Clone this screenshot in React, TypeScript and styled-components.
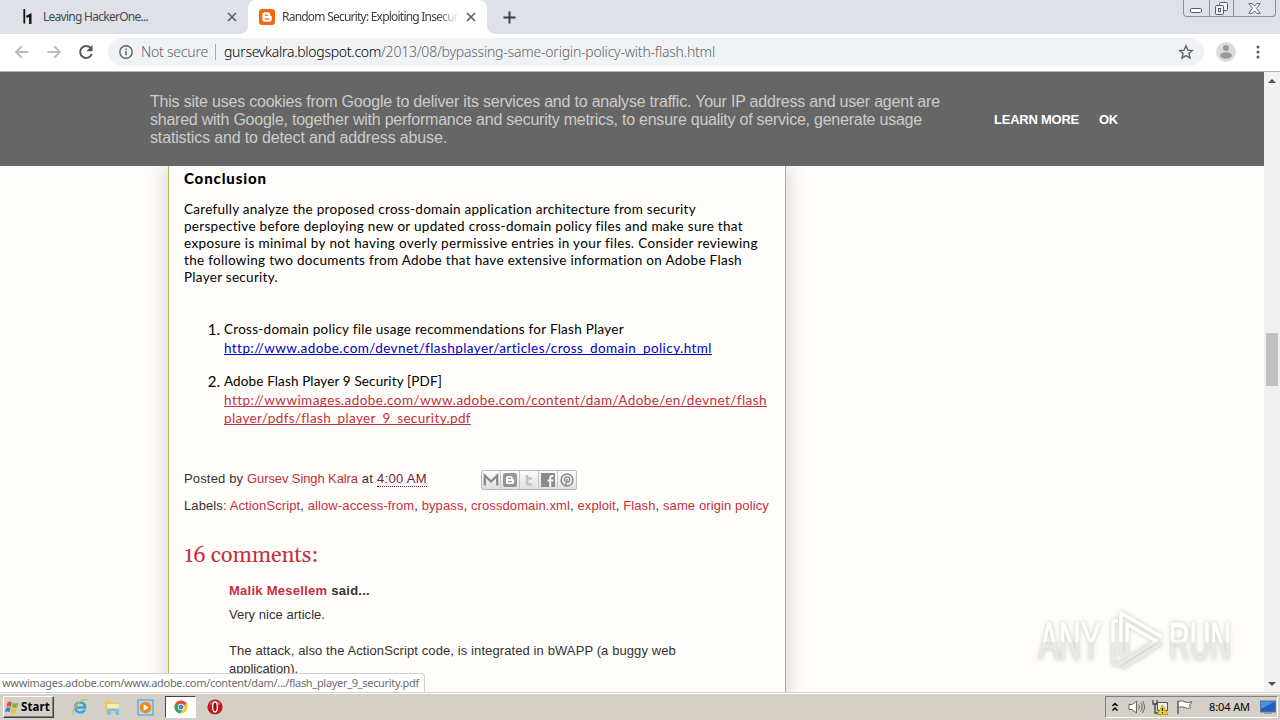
import React, {useLayoutEffect, useRef} from 'react';
import styled, {createGlobalStyle, css} from 'styled-components';

const ui = '"Noto Sans", "Open Sans", sans-serif';
const arial = '"Liberation Sans", Arial, sans-serif';
const calibri = 'Lato, "Noto Sans", sans-serif';

const GlobalStyle = createGlobalStyle`
    * {
        box-sizing: border-box;
    }
    body {
        margin: 0;
        overflow: hidden;
        font-family: ${arial};
    }
    a {
        color: #c4303e;
        text-decoration: none;
    }
`;

const Screen = styled.div`
    width: 1280px;
    height: 720px;
    display: flex;
    flex-direction: column;
    background: #fffdf9;
`;

const Run = styled.span`
    display: inline-block;
    white-space: pre;
`;

// Spreads the letters of one line of text over a given width
const Fit = ({width, children}: {width: number; children: React.ReactNode}) => {
    const ref = useRef<HTMLSpanElement>(null);

    useLayoutEffect(() => {
        const el = ref.current;
        if (!el) {
            return;
        }
        el.style.letterSpacing = '0.001px';
        const spare = width - el.getBoundingClientRect().width;
        el.style.letterSpacing = `${spare / (el.textContent || ' ').length}px`;
    }, [width]);

    return <Run ref={ref}>{children}</Run>;
};

/* ---------- browser ---------- */

const TabStrip = styled.div`
    height: 34px;
    flex: none;
    display: flex;
    align-items: flex-start;
    background: #dee1e8;
`;

const Tab = styled.div<{$active?: boolean}>`
    position: relative;
    width: ${(p) => (p.$active ? 239 : 248)}px;
    height: 34px;
    display: flex;
    align-items: center;
    padding: 0 11px 0 ${(p) => (p.$active ? 11 : 20)}px;
    font: 12px/34px ${ui};
    color: ${(p) => (p.$active ? '#3c4043' : '#45494d')};
    ${(p) =>
        p.$active &&
        css`
            background: #fff;
            border-radius: 8px 8px 0 0;
            &::before,
            &::after {
                content: '';
                position: absolute;
                bottom: 0;
                width: 8px;
                height: 8px;
            }
            &::before {
                left: -8px;
                background: radial-gradient(circle at 0 0, transparent 7.5px, #fff 8px);
            }
            &::after {
                right: -8px;
                background: radial-gradient(circle at 100% 0, transparent 7.5px, #fff 8px);
            }
        `}
`;

const TabTitle = styled.div<{$fade?: boolean}>`
    flex: 1;
    margin-left: 7px;
    overflow: hidden;
    ${(p) => p.$fade && 'mask-image: linear-gradient(90deg, #000 155px, transparent 177px);'}
`;

const NewTab = styled.div`
    height: 34px;
    display: flex;
    align-items: center;
    margin-left: 16px;
`;

const WindowButtons = styled.div`
    display: flex;
    width: 93px;
    height: 17px;
    margin: 0 4px 0 auto;
    border: 1px solid #8b8f99;
    border-top: 0;
    border-radius: 0 0 4px 4px;
`;

const WindowButton = styled.div<{$wide?: boolean}>`
    width: ${(p) => (p.$wide ? 42 : 25)}px;
    display: flex;
    align-items: center;
    justify-content: center;
    & + & {
        border-left: 1px solid #8b8f99;
    }
`;

const Toolbar = styled.div`
    height: 38px;
    flex: none;
    display: flex;
    align-items: center;
    padding: 0 12px 1px 12px;
    background: #fff;
    border-bottom: 1px solid #b4b4b4;
`;

const NavIcons = styled.div`
    display: flex;
    gap: 12px;
    width: 96px;
`;

const Omnibox = styled.div`
    width: 1096px;
    height: 28px;
    display: flex;
    align-items: center;
    padding: 0 10px;
    border-radius: 14px;
    background: #f0f3f5;
    font: 300 14px/28px ${ui};
    color: #5f6368;
`;

const Secure = styled.div`
    width: 68px;
    margin-left: 7px;
`;

const Divider = styled.div`
    width: 1px;
    height: 16px;
    margin: 0 8px 0 6px;
    background: #a5a8ab;
`;

const Host = styled.span`
    color: #000;
`;

const Star = styled.div`
    display: flex;
    margin-left: auto;
`;

const Profile = styled.div`
    display: flex;
    margin-left: 12px;
`;

const Menu = styled.div`
    display: flex;
    margin-left: 20px;
`;

/* ---------- page ---------- */

const Viewport = styled.div`
    position: relative;
    height: 620px;
    flex: none;
    display: flex;
    overflow: hidden;
`;

const Page = styled.div`
    width: 1264px;
    height: 620px;
    overflow: hidden;
`;

const CookieBar = styled.div`
    position: relative;
    z-index: 1;
    height: 94px;
    display: flex;
    padding: 21px 0 0 150px;
    background: #666;
    color: #ccc;
`;

const CookieText = styled.div`
    width: 844px;
    font-size: 16px;
    line-height: 18px;
`;

const CookieLinks = styled.div`
    display: flex;
    gap: 20px;
    padding-top: 18px;
    font-size: 13px;
    line-height: 18px;
    font-weight: 700;
    color: #fff;
`;

const Article = styled.div`
    width: 618px;
    height: 560px;
    margin-left: 168px;
    padding: 4px 0 0 15px;
    border: solid #b9b955;
    border-width: 0 1px;
    background: #fffdf9;
    box-shadow: 0 0 20px rgba(0, 0, 0, 0.2);
`;

const Heading = styled.div`
    font: 900 15px/17px ${calibri};
    color: #000;
`;

const Paragraph = styled.div`
    margin-top: 14px;
    font: 13.5px/17px ${calibri};
    color: #000;
`;

const Documents = styled.div`
    margin-top: 34px;
`;

const Document = styled.div`
    display: flex;
    margin-bottom: 14px;
    font: 13.5px/19px ${calibri};
    color: #000;
`;

const Marker = styled.div`
    width: 40px;
    padding-right: 4px;
    text-align: right;
    font-size: 15px;
`;

const DocLink = styled.a<{$plain?: boolean}>`
    display: block;
    line-height: 18.5px;
    color: ${(p) => (p.$plain ? '#0000c8' : '#c4303e')};
    span {
        text-decoration: underline 1px;
        text-underline-offset: 1px;
        text-decoration-skip-ink: none;
    }
`;

const Footer = styled.div`
    display: flex;
    align-items: center;
    height: 20px;
    margin-top: 41px;
    font-size: 13px;
    color: #333;
`;

const Time = styled.a`
    border-bottom: 1px dotted #7a2030;
    color: #7a2030;
`;

const Share = styled.div`
    display: flex;
    height: 20px;
    width: 96px;
    margin: 2px 0 0 54px;
    border: 1px solid #b9b9b9;
    border-radius: 2px;
    background: linear-gradient(#fcfcfc, #e0e0e0);
`;

const ShareButton = styled.div`
    width: 19px;
    flex: none;
    display: flex;
    align-items: center;
    justify-content: center;
    &:first-child {
        width: 18px;
    }
    & + & {
        border-left: 1px solid #c4c4c4;
    }
`;

const Labels = styled.div`
    margin-top: 8px;
    font-size: 13px;
    line-height: 18px;
    color: #333;
`;

const CommentsTitle = styled.div`
    margin-top: 27px;
    font: 22px/28px Gelasio, Georgia, "DejaVu Serif Condensed", "Liberation Serif", serif;
    color: #c4303e;
`;

const Comment = styled.div`
    margin: 12px 0 0 45px;
    font-size: 13px;
    line-height: 18px;
    color: #333;
`;

const Author = styled.div`
    margin-bottom: 6px;
    font-weight: 700;
`;

const ScrollBar = styled.div`
    width: 16px;
    display: flex;
    flex-direction: column;
    align-items: center;
    justify-content: space-between;
    padding: 5px 0 4px;
    background: #f1f1f1;
`;

const Thumb = styled.div`
    width: 12px;
    height: 53px;
    margin-bottom: 46px;
    background: #c1c1c1;
`;

const Status = styled.div`
    position: absolute;
    z-index: 2;
    left: 0;
    bottom: 0;
    width: 425px;
    height: 19px;
    padding-left: 2px;
    border: solid #d0d0ce;
    border-width: 1px 1px 0 0;
    border-radius: 0 4px 0 0;
    background: #fff;
    font: 11px/18px ${ui};
    color: #6c6c6c;
`;

const Watermark = styled.svg`
    position: absolute;
    left: 1030px;
    top: 530px;
    filter: drop-shadow(0 0 2px rgba(90, 90, 80, 0.35));
`;

/* ---------- taskbar ---------- */

const Taskbar = styled.div`
    height: 28px;
    flex: none;
    display: flex;
    align-items: center;
    padding: 1px 2px 0 3px;
    border-top: 1px solid #d4d0c8;
    box-shadow: inset 0 1px #fff;
    background: #d4d0c8;
`;

const Start = styled.div`
    width: 51px;
    height: 22px;
    display: flex;
    align-items: center;
    padding-left: 1px;
    gap: 1px;
    border: 1px solid;
    border-color: #fff #404040 #404040 #fff;
    box-shadow: inset -1px -1px #808080;
    font: 700 11.5px/20px ${ui};
    color: #000;
`;

const Launcher = styled.div<{$open?: boolean}>`
    width: ${(p) => (p.$open ? 31 : 33)}px;
    height: 22px;
    display: flex;
    align-items: center;
    justify-content: center;
    ${(p) =>
        p.$open &&
        css`
            margin: 0 2px 0 3px;
            border: 1px solid;
            border-color: #404040 #fff #fff #404040;
            background: #fff;
        `}
`;

const Launchers = styled.div`
    display: flex;
    margin-left: 9px;
`;

const Tray = styled.div`
    width: 173px;
    height: 22px;
    display: flex;
    align-items: center;
    margin-left: auto;
    padding-left: 5px;
    border: 1px solid;
    border-color: #808080 #fff #fff #808080;
`;

const Clock = styled.div`
    width: 41px;
    margin: 0 10px 0 16px;
    font: 11px/20px ${ui};
    color: #000;
`;

const TrayIcon = styled.div<{$gap: number}>`
    display: flex;
    margin-left: ${(p) => p.$gap}px;
`;

const Cross = () => (
    <svg width="10" height="10" viewBox="0 0 10 10">
        <path d="M1 1l8 8M9 1l-8 8" stroke="#5f6368" strokeWidth="1.7" />
    </svg>
);

const BloggerIcon = ({size, color}: {size: number; color: string}) => (
    <svg width={size} height={size} viewBox="0 0 16 16">
        <rect width="16" height="16" rx="3" fill={color} />
        <path
            d="M6.3 3.3h2.3a2.7 2.7 0 012.7 2.6c0 .8.2 1 .8 1 .5 0 .7.3.7.8v2a3 3 0 01-3 3H6.3a3 3 0 01-3-3V6.3a3 3 0 013-3z"
            fill="#fff"
        />
        <path d="M6.3 6.2h2.2M6.3 9.8h3.5" stroke={color} strokeWidth="1.3" strokeLinecap="round" />
    </svg>
);

const labels = ['ActionScript', 'allow-access-from', 'bypass', 'crossdomain.xml', 'exploit', 'Flash', 'same origin policy'];

const Browser = () => (
    <>
        <TabStrip>
            <Tab>
                <svg width="16" height="16" viewBox="0 0 16 16">
                    <path d="M4.300 0v14.500" stroke="#111" strokeWidth="1.800" />
                    <path d="M6.500 8l3.800-2V15" fill="none" stroke="#111" strokeWidth="2.400" />
                </svg>
                <TabTitle><Fit width={105}>Leaving HackerOne...</Fit></TabTitle>
                <Cross />
            </Tab>
            <Tab $active>
                <BloggerIcon size={16} color="#f4690f" />
                <TabTitle $fade><Fit width={176}>Random Security: Exploiting Insecur</Fit></TabTitle>
                <Cross />
            </Tab>
            <NewTab>
                <svg width="13" height="13" viewBox="0 0 13 13">
                    <path d="M6.5 0.5v12M0.5 6.5h12" stroke="#3c4043" strokeWidth="2" />
                </svg>
            </NewTab>
            <WindowButtons>
                <WindowButton>
                    <svg width="12" height="16" viewBox="0 0 12 16">
                        <rect x="0.5" y="8.5" width="11" height="4" rx="1" fill="#fff" stroke="#555b66" />
                    </svg>
                </WindowButton>
                <WindowButton>
                    <svg width="13" height="13" viewBox="0 0 13 13" fill="#f2f4f7" stroke="#555b66">
                        <rect x="4.5" y="0.5" width="8" height="8" rx="1" />
                        <rect x="0.5" y="3.5" width="8" height="9" rx="1" />
                        <rect x="3.5" y="6.5" width="2" height="3" />
                    </svg>
                </WindowButton>
                <WindowButton $wide>
                    <svg width="13" height="11" viewBox="0 0 13 11">
                        <path d="M.8.5h3.4l2.3 2.6L8.8.5h3.4L8.5 5.4l3.7 5H8.8L6.5 7.8l-2.3 2.6H.8l3.7-5z" fill="#fff" stroke="#555b66" strokeWidth=".9" />
                    </svg>
                </WindowButton>
            </WindowButtons>
        </TabStrip>
        <Toolbar>
            <NavIcons>
                <svg width="20" height="20" viewBox="0 0 20 20" fill="none" stroke="#b9bbbd" strokeWidth="1.8">
                    <path d="M16.5 10h-12M10 4l-6 6 6 6" />
                </svg>
                <svg width="20" height="20" viewBox="0 0 20 20" fill="none" stroke="#b9bbbd" strokeWidth="1.8">
                    <path d="M3.5 10h12M10 4l6 6-6 6" />
                </svg>
                <svg width="20" height="20" viewBox="0 0 20 20">
                    <path d="M14.8 6.2A6 6 0 1015.8 12" fill="none" stroke="#55595e" strokeWidth="2" />
                    <path d="M16.5 3v6.2h-6.2z" fill="#55595e" />
                </svg>
            </NavIcons>
            <Omnibox>
                <svg width="16" height="16" viewBox="0 0 16 16">
                    <circle cx="8" cy="8" r="6.2" fill="none" stroke="#5f6368" strokeWidth="1.4" />
                    <path d="M8 7v4.3M8 4.4v1.5" stroke="#5f6368" strokeWidth="1.5" />
                </svg>
                <Secure><Fit width={67}>Not secure</Fit></Secure>
                <Divider />
                <Host><Fit width={157}>gursevkalra.blogspot.com</Fit></Host>
                <Fit width={334}>/2013/08/bypassing-same-origin-policy-with-flash.html</Fit>
                <Star>
                    <svg width="16" height="16" viewBox="0 0 16 16">
                        <path d="M8 1.8l1.8 4.3 4.6.4-3.5 3 1.1 4.6L8 11.6l-4 2.5 1.1-4.6-3.5-3 4.6-.4z" fill="none" stroke="#5f6368" strokeWidth="1.4" />
                    </svg>
                </Star>
            </Omnibox>
            <Profile>
                <svg width="20" height="20" viewBox="0 0 20 20">
                    <circle cx="10" cy="10" r="10" fill="#dcdcdc" />
                    <circle cx="10" cy="6" r="3" fill="#9a9a9a" />
                    <ellipse cx="10" cy="13.5" rx="6" ry="3.2" fill="#9a9a9a" />
                </svg>
            </Profile>
            <Menu>
                <svg width="4" height="14" viewBox="0 0 4 14" fill="#55595e">
                    <circle cx="2" cy="2" r="1.5" />
                    <circle cx="2" cy="7" r="1.5" />
                    <circle cx="2" cy="12" r="1.5" />
                </svg>
            </Menu>
        </Toolbar>
    </>
);

const Post = () => (
    <Article>
        <Heading><Fit width={83}>Conclusion</Fit></Heading>
        <Paragraph>
            <Fit width={512}>Carefully analyze the proposed cross-domain application architecture from security</Fit><br />
            <Fit width={559}>perspective before deploying new or updated cross-domain policy files and make sure that</Fit><br />
            <Fit width={574}>exposure is minimal by not having overly permissive entries in your files. Consider reviewing</Fit><br />
            <Fit width={558}>the following two documents from Adobe that have extensive information on Adobe Flash</Fit><br />
            <Fit width={94}>Player security.</Fit>
        </Paragraph>
        <Documents>
            <Document>
                <Marker>1.</Marker>
                <div>
                    <Fit width={400}>Cross-domain policy file usage recommendations for Flash Player</Fit>
                    <DocLink $plain><Fit width={488}>http://www.adobe.com/devnet/flashplayer/articles/cross_domain_policy.html</Fit></DocLink>
                </div>
            </Document>
            <Document>
                <Marker>2.</Marker>
                <div>
                    <Fit width={218}>Adobe Flash Player 9 Security [PDF]</Fit>
                    <DocLink>
                        <Fit width={543}>http://wwwimages.adobe.com/www.adobe.com/content/dam/Adobe/en/devnet/flash</Fit><br />
                        <Fit width={247}>player/pdfs/flash_player_9_security.pdf</Fit>
                    </DocLink>
                </div>
            </Document>
        </Documents>
        <Footer>
            <Fit width={63}>Posted by </Fit>
            <a><Fit width={111}>Gursev Singh Kalra</Fit></a>
            <Fit width={19}> at </Fit>
            <Time><Fit width={50}>4:00 AM</Fit></Time>
            <Share>
                <ShareButton>
                    <svg width="16" height="14" viewBox="0 0 16 14">
                        <path d="M1.8 12.5V2.5L8 8.5l6.2-6v10" fill="none" stroke="#858585" strokeWidth="2.2" />
                    </svg>
                </ShareButton>
                <ShareButton><BloggerIcon size={14} color="#959595" /></ShareButton>
                <ShareButton>
                    <svg width="12" height="14" viewBox="0 0 12 14">
                        <path d="M4 2v7q0 2.500 2.500 2.500H9M4 5.500h5" fill="none" stroke="#c2c2c2" strokeWidth="2.600" />
                    </svg>
                </ShareButton>
                <ShareButton>
                    <svg width="14" height="14" viewBox="0 0 14 14">
                        <rect width="14" height="14" fill="#8b8b8b" />
                        <path d="M12.500 3H11q-1.800 0-1.800 2v9M6.500 7.500h6" fill="none" stroke="#f5f5f5" strokeWidth="2" />
                    </svg>
                </ShareButton>
                <ShareButton>
                    <svg width="14" height="14" viewBox="0 0 14 14" fill="none" stroke="#8b8b8b">
                        <circle cx="7" cy="7" r="5.900" strokeWidth="1.500" />
                        <path d="M5 8.300C3.400 5.500 5.500 3.800 7.400 3.900c3.500.200 2.700 5 .300 5q-.900 0-1.200-.8M7.200 5.800L5.600 12" strokeWidth="1.400" />
                    </svg>
                </ShareButton>
            </Share>
        </Footer>
        <Labels>
            <Fit width={585}>
                Labels:{' '}
                {labels.map((label, index) => (
                    <React.Fragment key={label}>{index > 0 && ', '}<a>{label}</a></React.Fragment>
                ))}
            </Fit>
        </Labels>
        <CommentsTitle><Fit width={134}>16 comments:</Fit></CommentsTitle>
        <Comment>
            <Author><Fit width={141}><a>Malik Mesellem</a> said...</Fit></Author>
            <Fit width={96}>Very nice article.</Fit><br /><br />
            <Fit width={447}>The attack, also the ActionScript code, is integrated in bWAPP (a buggy web</Fit><br />
            <Fit width={69}>application).</Fit>
        </Comment>
    </Article>
);

const AnyRun = () => (
    <Watermark width="224" height="82" viewBox="0 0 224 82">
        <defs>
            <linearGradient id="mark" x1="0" y1="0" x2="0" y2="82" gradientUnits="userSpaceOnUse">
                <stop offset=".47" stopColor="#fff" />
                <stop offset=".5" stopColor="#e9e9e4" />
            </linearGradient>
        </defs>
        <g fill="url(#mark)" fontFamily="Liberation Sans Narrow, Liberation Sans, sans-serif" fontSize="51">
            <text x="9" y="57" textLength="62" lengthAdjust="spacingAndGlyphs" stroke="url(#mark)">ANY</text>
            <text x="139" y="57" textLength="62" lengthAdjust="spacingAndGlyphs" stroke="url(#mark)">RUN</text>
        </g>
        <g fill="none" stroke="url(#mark)" strokeWidth="3.500" strokeLinejoin="round">
            <path d="M88 19h-5v42l5 2M91 55V11l41 24M97 51V22l29 17-38 24M132 41L92 66" />
        </g>
    </Watermark>
);

const TaskbarRow = () => (
    <Taskbar>
        <Start>
            <svg width="15" height="15" viewBox="0 0 16 16">
                <path d="M2.800 2.500Q5 .8 7.500 2.500L6.300 7.300Q4 5.800 1.500 7.300z" fill="#e5572a" />
                <path d="M8.600 3Q11 4.500 14.500 3L13 7.800Q10 9.200 7.300 7.700z" fill="#7db63a" />
                <path d="M1.200 8.400Q4 7 6 8.400L4.800 13Q2.500 11.500 0 13z" fill="#3b83cf" />
                <path d="M7 8.900Q9.500 10.400 12.700 8.900L11.300 13.700Q8.500 15 5.800 13.500z" fill="#f5bd31" />
            </svg>
            <Fit width={29}>Start</Fit>
        </Start>
        <Launchers>
            <Launcher>
                <svg width="18" height="18" viewBox="0 0 18 18" fill="none">
                    <path d="M4.500 9.500h9.500q0-5-4.800-5T4.300 9.800q.2 4.700 5 4.700 3.200 0 4.500-2.800" stroke="#38a3dc" strokeWidth="2.600" />
                    <path d="M3 15.500C-1 14 9-.5 16.500 2" stroke="#d7b348" strokeWidth="1.300" />
                </svg>
            </Launcher>
            <Launcher>
                <svg width="17" height="17" viewBox="0 0 17 17">
                    <path d="M1 2h6l1 2h7v10H1z" fill="#e9ca67" />
                    <path d="M3 5h12v8H3z" fill="#fbeea9" />
                    <path d="M3 9.500h12V16h-3.500v-3.500h-5V16H3z" fill="#79bfe4" />
                </svg>
            </Launcher>
            <Launcher>
                <svg width="17" height="17" viewBox="0 0 17 17">
                    <rect x="1" y="1" width="15" height="15" fill="#b5d9f2" stroke="#4f91c4" />
                    <circle cx="8.500" cy="8.500" r="5.800" fill="#f08a1d" />
                    <path d="M6.700 5.200v6.600l5-3.300z" fill="#fff" />
                </svg>
            </Launcher>
            <Launcher $open>
                <svg width="14" height="14" viewBox="0 0 14 14">
                    <circle cx="7" cy="7" r="6.500" fill="#f7c728" />
                    <path d="M7 7L1.400 3.700A6.500 6.500 0 0112.600 3.700z" fill="#dd4b3e" />
                    <path d="M7 7L1.400 3.700A6.500 6.500 0 006.200 13.500L9 8z" fill="#2ba35a" />
                    <circle cx="7" cy="7" r="3.200" fill="#fff" />
                    <circle cx="7" cy="7" r="2.500" fill="#4688ee" />
                </svg>
            </Launcher>
            <Launcher>
                <svg width="16" height="16" viewBox="0 0 16 16">
                    <circle cx="8" cy="8" r="7.600" fill="#c4161c" />
                    <path d="M2 5.500a6.800 6.800 0 0112 0z" fill="#e45a55" />
                    <ellipse cx="8" cy="8" rx="2.300" ry="5" fill="#8a0c10" stroke="#fff" strokeWidth="1.300" />
                </svg>
            </Launcher>
        </Launchers>
        <Tray>
            <svg width="8" height="10" viewBox="0 0 8 10">
                <path d="M1.500 4L4 1.500 6.500 4M1.500 8.500L4 6l2.500 2.500" fill="none" stroke="#000" strokeWidth="1.500" />
            </svg>
            <TrayIcon $gap={9}>
                <svg width="18" height="16" viewBox="0 0 18 16" fill="none" stroke="#666">
                    <path d="M1 5.500h3L8.500 2v12L4 10.500H1z" fill="#fff" />
                    <path d="M10.500 5.500q2 2.500 0 5M12.500 3.500q3.400 4.500 0 9M14.500 2q4 6 0 12" />
                </svg>
            </TrayIcon>
            <TrayIcon $gap={6}>
                <svg width="17" height="16" viewBox="0 0 17 16">
                    <path d="M5.500 3.500h10v8h-10z" fill="#eee" stroke="#555" />
                    <path d="M1 1v4h4V1M3 5v9h5" fill="none" stroke="#444" strokeWidth="1.300" />
                    <path d="M10.500 6L16 15.500H5z" fill="#f5d21b" stroke="#a88a00" strokeWidth=".7" />
                    <path d="M10.500 9v3M10.500 13v1.300" stroke="#222" strokeWidth="1.200" />
                </svg>
            </TrayIcon>
            <TrayIcon $gap={7}>
                <svg width="17" height="16" viewBox="0 0 17 16">
                    <path d="M2.500 2.500q4-2 6.500.5 3 1.500 7-.5l-2.500 3.500 1 3q-3.500 1-5.500-.5-3-1.500-6.500 0" fill="#fff" stroke="#666" />
                    <path d="M2 1.500V15" stroke="#666" strokeWidth="1.600" />
                </svg>
            </TrayIcon>
            <Clock><Fit width={41}>8:04 AM</Fit></Clock>
            <svg width="16" height="14" viewBox="0 0 16 14">
                <rect x=".5" y="1" width="15" height="11" fill="#1f5fbd" stroke="#5b7591" />
                <path d="M1 1.500h14L1 9z" fill="#4b92e0" />
                <path d="M4 13.200h8" stroke="#7b8995" />
            </svg>
        </Tray>
    </Taskbar>
);

const App = () => (
    <Screen>
        <GlobalStyle />
        <Browser />
        <Viewport>
            <Page>
                <CookieBar>
                    <CookieText>
                        <Fit width={790}>This site uses cookies from Google to deliver its services and to analyse traffic. Your IP address and user agent are</Fit><br />
                        <Fit width={772}>shared with Google, together with performance and security metrics, to ensure quality of service, generate usage</Fit><br />
                        <Fit width={297}>statistics and to detect and address abuse.</Fit>
                    </CookieText>
                    <CookieLinks>
                        <Fit width={85}>LEARN MORE</Fit>
                        <Fit width={19}>OK</Fit>
                    </CookieLinks>
                </CookieBar>
                <Post />
            </Page>
            <ScrollBar>
                <svg width="8" height="8" viewBox="0 0 8 8"><path d="M0 6l4-4 4 4z" fill="#505050" /></svg>
                <Thumb />
                <svg width="8" height="8" viewBox="0 0 8 8"><path d="M0 2l4 4 4-4z" fill="#505050" /></svg>
            </ScrollBar>
            <Status><Fit width={417}>wwwimages.adobe.com/www.adobe.com/content/dam/.../flash_player_9_security.pdf</Fit></Status>
            <AnyRun />
        </Viewport>
        <TaskbarRow />
    </Screen>
);

export default App;
